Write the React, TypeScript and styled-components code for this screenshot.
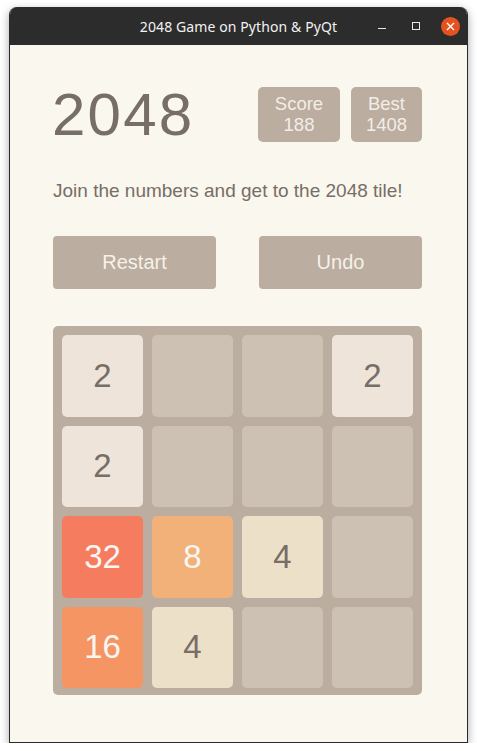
import React from "react";
import styled, { createGlobalStyle } from "styled-components";

const Global = createGlobalStyle`
  html, body { margin: 0; padding: 0; background: #ffffff; }
  body { font-family: "Liberation Sans", Arial, sans-serif; }
  * { box-sizing: border-box; }
`;

const Window = styled.div`
  margin: 7px 0 0 9px;
  width: 459px;
  height: 736px;
  border-radius: 8px 8px 0 0;
  border: 1px solid #2b2b2b;
  border-top: none;
  box-shadow: 0 3px 10px rgba(0, 0, 0, 0.35);
  display: flex;
  flex-direction: column;
  overflow: hidden;
  background: #faf8ef;
`;

const TitleBar = styled.div`
  height: 38px;
  background: #2c2c2c;
  display: grid;
  grid-template-columns: 1fr auto 1fr;
  align-items: center;
  flex-shrink: 0;
`;

const Title = styled.div`
  grid-column: 2;
  color: #f2f2f2;
  font-family: "Noto Sans", "DejaVu Sans", sans-serif;
  font-size: 14px;
  letter-spacing: 0.1px;
`;

const Controls = styled.div`
  grid-column: 3;
  justify-self: end;
  display: flex;
  align-items: center;
  height: 100%;
`;

const ControlSlot = styled.div`
  width: 34px;
  height: 100%;
  display: flex;
  align-items: center;
  justify-content: center;
`;

const MinIcon = styled.div`
  width: 8px;
  height: 1.5px;
  background: #e8e8e8;
  margin-top: 5px;
`;

const MaxIcon = styled.div`
  width: 8px;
  height: 8px;
  border: 1.3px solid #e8e8e8;
`;

const CloseBtn = styled.div`
  width: 19px;
  height: 19px;
  border-radius: 50%;
  background: #e4531f;
  display: flex;
  align-items: center;
  justify-content: center;
`;

const Content = styled.div`
  flex: 1;
  background: #faf7ef;
  display: flex;
  justify-content: flex-start;
  padding-left: 43px;
`;

const Column = styled.div`
  width: 369px;
  display: flex;
  flex-direction: column;
  padding-top: 42px;
`;

const Header = styled.div`
  height: 55px;
  display: flex;
  align-items: center;
  justify-content: space-between;
`;

const BigTitle = styled.h1`
  margin: 0 0 0 -1px;
  font-weight: normal;
  font-size: 60px;
  letter-spacing: 2.2px;
  line-height: 55px;
  color: #776e65;
`;

const Scores = styled.div`
  display: flex;
  gap: 11px;
  height: 55px;
`;

const ScoreBox = styled.div<{ $w: number }>`
  width: ${(p) => p.$w}px;
  height: 55px;
  background: #bbada0;
  border-radius: 5px;
  color: #f3ede6;
  text-align: center;
  padding-top: 6px;
  display: flex;
  flex-direction: column;
  align-items: center;
`;

const ScoreLine = styled.div`
  font-size: 18.5px;
  line-height: 21.4px;
`;

const Subtitle = styled.p`
  margin: 38px 0 0 0;
  font-size: 19px;
  line-height: 22px;
  color: #776e65;
`;

const ButtonRow = styled.div`
  margin-top: 34px;
  display: flex;
  justify-content: space-between;
`;

const Button = styled.button`
  width: 163px;
  height: 53px;
  border: none;
  border-radius: 4px;
  background: #bbada0;
  color: #f6f1ea;
  font-family: "Liberation Sans", Arial, sans-serif;
  font-size: 20px;
  padding: 0;
`;

const Board = styled.div`
  margin-top: 37px;
  width: 369px;
  height: 369px;
  background: #bbada0;
  border-radius: 5px;
  padding: 9px;
  display: grid;
  grid-template-columns: repeat(4, 81px);
  grid-template-rows: repeat(4, 81.5px);
  gap: 9px;
`;

const tileColors: Record<number, { bg: string; fg: string }> = {
  0: { bg: "#cdc1b4", fg: "#776e65" },
  2: { bg: "#eee4da", fg: "#776e65" },
  4: { bg: "#ede0c8", fg: "#776e65" },
  8: { bg: "#f2b179", fg: "#f9f6f2" },
  16: { bg: "#f59563", fg: "#f9f6f2" },
  32: { bg: "#f67c5f", fg: "#f9f6f2" },
};

const Tile = styled.div<{ $v: number }>`
  border-radius: 5px;
  background: ${(p) => tileColors[p.$v].bg};
  color: ${(p) => tileColors[p.$v].fg};
  display: flex;
  align-items: center;
  justify-content: center;
  font-size: 33px;
`;

const grid = [
  [2, 0, 0, 2],
  [2, 0, 0, 0],
  [32, 8, 4, 0],
  [16, 4, 0, 0],
];

export default function App() {
  return (
    <>
      <Global />
      <Window>
        <TitleBar>
          <Title>2048 Game on Python &amp; PyQt</Title>
          <Controls>
            <ControlSlot>
              <MinIcon />
            </ControlSlot>
            <ControlSlot>
              <MaxIcon />
            </ControlSlot>
            <ControlSlot>
              <CloseBtn>
                <svg width="9" height="9" viewBox="0 0 9 9">
                  <path d="M1 1L8 8M8 1L1 8" stroke="#ffffff" strokeWidth="1.4" />
                </svg>
              </CloseBtn>
            </ControlSlot>
          </Controls>
        </TitleBar>
        <Content>
          <Column>
            <Header>
              <BigTitle>2048</BigTitle>
              <Scores>
                <ScoreBox $w={82}>
                  <ScoreLine>Score</ScoreLine>
                  <ScoreLine>188</ScoreLine>
                </ScoreBox>
                <ScoreBox $w={71}>
                  <ScoreLine>Best</ScoreLine>
                  <ScoreLine>1408</ScoreLine>
                </ScoreBox>
              </Scores>
            </Header>
            <Subtitle>Join the numbers and get to the 2048 tile!</Subtitle>
            <ButtonRow>
              <Button>Restart</Button>
              <Button>Undo</Button>
            </ButtonRow>
            <Board>
              {grid.flat().map((v, i) => (
                <Tile key={i} $v={v}>
                  {v ? v : ""}
                </Tile>
              ))}
            </Board>
          </Column>
        </Content>
      </Window>
    </>
  );
}
